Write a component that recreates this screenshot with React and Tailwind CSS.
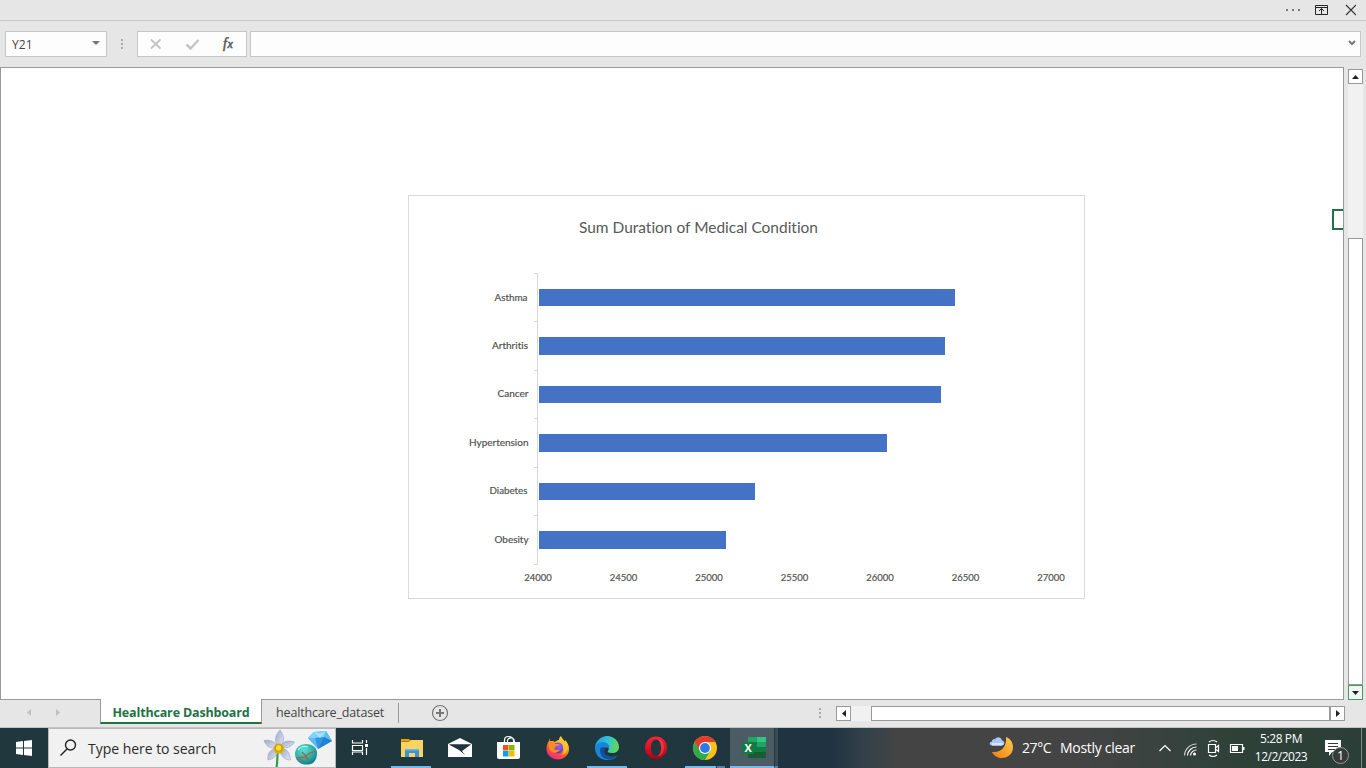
import React from "react";

const BARS = [
  { name: "Asthma", y: 289, h: 17, end: 955, base: 301, lx: 494.5, lw: 33 },
  { name: "Arthritis", y: 337, h: 18, end: 945, base: 349, lx: 492, lw: 36 },
  { name: "Cancer", y: 386, h: 17, end: 941, base: 397, lx: 497.5, lw: 31 },
  { name: "Hypertension", y: 434, h: 18, end: 887, base: 446, lx: 469, lw: 59.5 },
  { name: "Diabetes", y: 483, h: 17, end: 755, base: 494, lx: 489.5, lw: 38 },
  { name: "Obesity", y: 531, h: 18, end: 726, base: 543, lx: 494.5, lw: 34 },
];
const TICKS_Y = [273, 321, 370, 418, 467, 515, 564];
const LABELS_X = [24000, 24500, 25000, 25500, 26000, 26500, 27000];

function Chart() {
  return (
    <svg
      width="677"
      height="404"
      viewBox="408 195 677 404"
      className="block font-['Lato',sans-serif] [font-variant-ligatures:none]"
    >
      <rect x="408.5" y="195.5" width="676" height="403" fill="#fff" stroke="#d9d9d9" />
      <text x="579" y="233" fontSize="16" fill="#595959" textLength="239" lengthAdjust="spacingAndGlyphs">
        Sum Duration of Medical Condition
      </text>
      <path d="M537.5 273V565" stroke="#d9d9d9" />
      {TICKS_Y.map((y) => (
        <path key={y} d={`M534 ${y + 0.5}H538`} stroke="#d9d9d9" />
      ))}
      {BARS.map((b) => (
        <g key={b.name}>
          <rect x="539" y={b.y} width={b.end - 539} height={b.h} fill="#4472c4" />
          <text
            x={b.lx}
            y={b.base}
            fontSize="10"
            fill="#505050"
            stroke="#595959"
            strokeWidth="0.2"
            textLength={b.lw}
            lengthAdjust="spacingAndGlyphs"
          >
            {b.name}
          </text>
        </g>
      ))}
      {LABELS_X.map((v, i) => (
        <text
          key={v}
          x={524.3 + i * 85.5}
          y="581"
          fontSize="10"
          fill="#505050"
          stroke="#595959"
          strokeWidth="0.2"
          textLength="27.5"
          lengthAdjust="spacingAndGlyphs"
        >
          {v}
        </text>
      ))}
    </svg>
  );
}

function Dots({ className }) {
  return (
    <svg width="2" height="10" viewBox="0 0 2 10" className={className} fill="#aaa">
      <path d="M0 0h2v2H0zM0 4h2v2H0zM0 8h2v2H0z" />
    </svg>
  );
}

function TopBar() {
  return (
    <div className="flex h-[21px] items-start justify-end border-b border-[#c6c6c6] pr-[10px]">
      <svg width="71" height="20" viewBox="1285 0 71 20">
        <path d="M1286 9h2v2h-2zM1292 9h2v2h-2zM1298 9h2v2h-2z" fill="#777" />
        <path d="M1315.5 5.500h12v9h-12zM1315.500 7.500h12" fill="none" stroke="#262626" />
        <path d="M1321.500 14V8.500M1319 11l2.500-2.500 2.500 2.500" fill="none" stroke="#262626" />
        <path d="M1346 5l10 10M1356 5l-10 10" stroke="#333" strokeWidth="1.200" fill="none" />
      </svg>
    </div>
  );
}

function FormulaBar() {
  return (
    <div className="flex h-[46px] pl-[5px] pt-[10px]">
      <div className="flex h-[26px] w-[102px] items-center justify-between border border-[#c6c6c6] bg-[#fdfdfd] pl-[6px] pr-[6px]">
        <span className="pt-px font-['Open_Sans',sans-serif] text-[12px] tracking-[0.100px] text-[#444]">Y21</span>
        <svg width="8" height="4" viewBox="0 0 8 4" className="mb-[3px]" fill="#777">
          <path d="M0 0h8L4 4z" />
        </svg>
      </div>
      <Dots className="ml-[14px] mt-2" />
      <div className="ml-[14px] flex h-[26px] w-[110px] border border-[#c6c6c6] bg-[#fdfdfd]">
        <svg width="108" height="24" viewBox="138 32 108 24" fill="none">
          <path d="M151 39.500l9.500 9M160.500 39.500l-9.500 9" stroke="#c3c3c3" strokeWidth="1.800" />
          <path d="M186.500 44.500l4 4 8-8.500" stroke="#c6c6c6" strokeWidth="2.500" />
          <text x="223" y="48" fontSize="14" fontStyle="italic" fill="#555" stroke="#555" strokeWidth="0.500" className="font-['Liberation_Serif',serif]">f</text>
          <text x="227.500" y="48" fontSize="12" fontStyle="italic" fill="#555" stroke="#555" strokeWidth="0.500" className="font-['Liberation_Serif',serif]">x</text>
        </svg>
      </div>
      <div className="ml-[3px] flex h-[26px] w-[1111px] items-center justify-end border border-[#c6c6c6] bg-[#fdfdfd] pr-[4px]">
        <svg width="8" height="6" viewBox="0 0 8 6" fill="none" className="mb-[2px]">
          <path d="M1 1l3 3 3-3" stroke="#777" strokeWidth="2" />
        </svg>
      </div>
    </div>
  );
}

function Sheet() {
  return (
    <div className="flex h-[633px]">
      <div className="flex h-[633px] w-[1344px] justify-between overflow-hidden border border-[#999] bg-white">
        <div className="pl-[407px] pt-[127px]">
          <Chart />
        </div>
        <div className="mt-[141px] h-[21px] w-[11px] border-2 border-r-0 border-[#217346]" />
      </div>
      <div className="ml-[4px] mt-[2px] flex h-[631px] w-[15px] flex-col bg-[#f1f1f1]">
        <div className="flex h-[15px] items-center justify-center border border-[#999] bg-white">
          <svg width="7" height="4" viewBox="0 0 7 4" fill="#222"><path d="M0 4h7L3.500 0z" /></svg>
        </div>
        <div className="mt-[154px] h-[447px] border border-[#999] bg-white" />
        <div className="flex h-[15px] items-center justify-center border border-[#439b63] bg-[#f0f8f3]">
          <svg width="7" height="4" viewBox="0 0 7 4" fill="#222"><path d="M0 0h7L3.500 4z" /></svg>
        </div>
      </div>
    </div>
  );
}

function SheetTabs() {
  return (
    <div className="flex h-[28px] items-start border-b border-[#c4c4c4] font-['Open_Sans',sans-serif] text-[12.500px]">
      <svg width="100" height="27" viewBox="0 700 100 27" fill="#c0c0c0">
        <path d="M31 709v7l-4-3.500zM56 709v7l4-3.500z" />
      </svg>
      <div className="-mt-px flex h-[25px] w-[162px] items-center justify-center border-b-2 border-l border-r border-b-[#217346] border-l-[#999] border-r-[#999] bg-white pt-[5px]">
        <span className="whitespace-nowrap font-bold tracking-[-0.160px] text-[#217346]">Healthcare Dashboard</span>
      </div>
      <div className="flex h-[24px] w-[136px] items-center pl-[14px] pt-[2px]">
        <span className="whitespace-nowrap tracking-[-0.150px] text-[#444]">healthcare_dataset</span>
      </div>
      <div className="mt-[3px] h-[20px] w-px bg-[#999]" />
      <svg width="18" height="18" viewBox="0 0 18 18" className="ml-[32px] mt-[4px]" fill="none">
        <circle cx="9" cy="9" r="7.500" stroke="#777" strokeWidth="1.200" />
        <path d="M9 5v8M5 9h8" stroke="#777" strokeWidth="2" />
      </svg>
      <Dots className="ml-[370px] mt-[8px]" />
      <div className="ml-[15px] mt-[6px] flex h-[15px] w-[509px] bg-[#f1f1f1]">
        <div className="flex w-[15px] items-center justify-center border border-[#999] bg-white">
          <svg width="4" height="7" viewBox="0 0 4 7" fill="#222"><path d="M4 0v7L0 3.500z" /></svg>
        </div>
        <div className="ml-[20px] w-[459px] border border-[#999] bg-white" />
        <div className="flex w-[15px] items-center justify-center border border-[#999] bg-white">
          <svg width="4" height="7" viewBox="0 0 4 7" fill="#222"><path d="M0 0v7l4-3.500z" /></svg>
        </div>
      </div>
    </div>
  );
}

function SearchArt() {
  return (
    <svg width="72" height="38" viewBox="263 729 72 38">
      <defs>
        <radialGradient id="stone" cx="0.4" cy="0.3" r="0.8">
          <stop offset="0" stopColor="#5fe0d6" />
          <stop offset="0.6" stopColor="#27aaa6" />
          <stop offset="1" stopColor="#0e6f74" />
        </radialGradient>
        <linearGradient id="petal" x1="0" y1="0" x2="1" y2="1">
          <stop offset="0" stopColor="#9faacb" />
          <stop offset="1" stopColor="#dfe5f4" />
        </linearGradient>
      </defs>
      <path d="M277.500 752q0 9-1 16" stroke="#2f9e4f" strokeWidth="2.200" fill="none" />
      <g fill="url(#petal)" stroke="#8c98bd" strokeWidth="0.500">
        <path d="M278 746c-4-5-3-11 2-16 4 5 5 11 1 16z" />
        <path d="M281 746c2-5 7-6 13.500-4-3 5-8 7-13 5z" />
        <path d="M281 749c6-1 9 4 9.500 11-6 0-10-4-10.500-10z" />
        <path d="M277 750c1 5-3 9-9 10-1-6 2-11 8-11z" />
        <path d="M276 748c-6 1-10-2-12-7.500 6-1 12 1 13 6z" />
      </g>
      <circle cx="278.700" cy="748.500" r="5.300" fill="#dfae12" />
      <circle cx="278.700" cy="748" r="3.400" fill="#f8dc32" stroke="#b98408" strokeWidth="0.800" />
      <path d="M295 754c0-6 5-10 11-10 7 0 11 4 11 9 0 4-1 7-4 10-4 2-9 2-13 0-3-2-5-5-5-9z" fill="url(#stone)" />
      <path d="M297 758l8-1 5-4 6-2M302 752l4 4M306 757l3 4M299 759l5 2" stroke="#a26349" strokeWidth="1.300" fill="none" />
      <path d="M298 750q4-5 10-3" stroke="#a5f5eb" strokeWidth="1.300" fill="none" />
      <path d="M308 738l6-6 12-1 6 10-14 8z" fill="#4ab0ef" />
      <path d="M308 738l6-6 12-1-2 6-9 1z" fill="#7fd2fb" />
      <path d="M326 731l6 10-8-4z" fill="#5cbcf4" />
      <path d="M308 738h7l3 11z" fill="#5dbcf3" />
      <path d="M315 738l9-1-6 12z" fill="#2f97e4" />
      <path d="M324 737l8 4-14 8z" fill="#2380d4" />
      <path d="M314 732l6 2 6-3-6 7z" fill="#a8e4ff" />
    </svg>
  );
}

const Explorer = () => (
  <svg width="40" height="40" viewBox="390 728 40 40">
    <path d="M400 739h8l2 2h11v6h-21z" fill="#e3a008" />
    <path d="M400 742h8l2-2h12v17h-22z" fill="#ffd45e" />
    <path d="M401 741.500h7" stroke="#b77904" />
    <path d="M404 757v-8h14v8h-4v-4h-6v4z" fill="#3c91dc" />
    <path d="M404 749h14v1.500h-14z" fill="#66b4ee" />
  </svg>
);

const Mail = () => (
  <svg width="40" height="40" viewBox="440 728 40 40">
    <path d="M448 744l12-6 12 6v13h-24z" fill="#fff" />
    <path d="M449 744.500h22l-9 6.500 3 4-6-5z" fill="#20343d" />
    <path d="M449 744.500l11 5 11-5z" fill="#20343d" />
  </svg>
);

const Store = () => (
  <svg width="40" height="40" viewBox="489 728 40 40">
    <path d="M504.500 743v-3q0-3.500 4-3.500t5 3.500v3M507.500 742v-2q1-2.500 5-2 2 1 2 4" stroke="#fff" strokeWidth="1.200" fill="none" />
    <path d="M497 742h23v15q0 2-2 2h-19q-2 0-2-2z" fill="#fff" />
    <path d="M503 745h5.500v5.500H503z" fill="#f25022" />
    <path d="M509 745h5.500v5.500H509z" fill="#7fba00" />
    <path d="M503 751h5.500v5.500H503z" fill="#00a4ef" />
    <path d="M509 751h5.500v5.500H509z" fill="#ffb900" />
  </svg>
);

const Firefox = () => (
  <svg width="40" height="40" viewBox="538 728 40 40">
    <defs>
      <linearGradient id="fx" x1="0.800" y1="0" x2="0.250" y2="1">
        <stop offset="0" stopColor="#fff04a" />
        <stop offset="0.350" stopColor="#ffb01f" />
        <stop offset="0.650" stopColor="#ff562d" />
        <stop offset="1" stopColor="#f0209b" />
      </linearGradient>
      <radialGradient id="fxg" cx="0.600" cy="0.300" r="0.800">
        <stop offset="0" stopColor="#a15cff" />
        <stop offset="1" stopColor="#4b3bb0" />
      </radialGradient>
    </defs>
    <path d="M549 738l1 3 3 0 2 1c1-1 2-2 4-2 0-1 0-2 2-4 1 3 3 4 4 6v-2c3 3 4 6 4 9 0 6-5 10.500-11 10.500s-11.500-4.500-11.500-10.500c0-4 1-6 2.500-8z" fill="url(#fx)" />
    <circle cx="558" cy="748" r="5.500" fill="url(#fxg)" />
    <path d="M549 743c2-1 5-1 6 1l4 0c0 1.500-2 2-3.500 2.500 0 2-1 2-1.500 2 1 2 4 1 6 1-1 2-4 4-7 3-3-1-5-5-4-9.500z" fill="#ff8b22" />
    <path d="M558 741q5 0 5 6 2 5-2 8 6-1 6-7 0-5-6-11z" fill="#ffc42c" opacity="0.850" />
  </svg>
);

const Edge = () => (
  <svg width="40" height="40" viewBox="587 728 40 40">
    <defs>
      <linearGradient id="ed1" x1="0" y1="0.300" x2="1" y2="0.500">
        <stop offset="0" stopColor="#1a9bea" />
        <stop offset="0.500" stopColor="#31c3db" />
        <stop offset="1" stopColor="#62d94e" />
      </linearGradient>
      <linearGradient id="ed2" x1="0" y1="0" x2="0" y2="1">
        <stop offset="0" stopColor="#1685d8" />
        <stop offset="1" stopColor="#1b86dd" />
      </linearGradient>
    </defs>
    <path d="M595 748c0-7 6-12 12-12 7 0 12 5 12 11 0 4-3 6-7 6-3 0-5-1-4-2 2-3 1-8-5-8-4 0-7 2-8 5z" fill="url(#ed1)" />
    <path d="M595 748c1-4 5-6 9-6 4 1 6 3 5 7-1-2-4-2-5 1-1 4 3 7 8 7 3 0 4-1 5-1-2 3-6 4-10 4-7 0-12-5-12-12z" fill="url(#ed2)" />
    <path d="M600 750c0 6 4 9.500 9 9.500 4 0 7-2 8-4-4 2.500-9 2-11.500-.5-2-3-2-5 0-7.500-3-1.500-5.500 0-5.500 2.500z" fill="#10519f" />
  </svg>
);

const Opera = () => (
  <svg width="40" height="40" viewBox="636 728 40 40">
    <defs>
      <linearGradient id="op" x1="0" y1="0" x2="0" y2="1">
        <stop offset="0" stopColor="#ff2436" />
        <stop offset="1" stopColor="#b00018" />
      </linearGradient>
    </defs>
    <path fillRule="evenodd" d="M656 736.500a11 11.200 0 1 0 0 22.400 11 11.200 0 1 0 0-22.400zm0 3c3 0 5 3.500 5 8.200s-2 8.200-5 8.200-5-3.500-5-8.200 2-8.200 5-8.200z" fill="url(#op)" />
    <path d="M657 739.500c4-1 7 3 7 8.200s-3 9.200-7 8.200c3-1 4-4 4-8.200s-1-7.200-4-8.200z" fill="#ff5260" opacity="0.450" />
  </svg>
);

const Chrome = () => (
  <svg width="40" height="40" viewBox="-20 -20 40 40">
    <circle r="12" fill="#fbc116" />
    <path d="M-10.400-6A12 12 0 0 1 10.400-6H0L-5.200 3z" fill="#e33b2e" />
    <path d="M-10.400-6A12 12 0 0 0 0 12L5.200 3H-5.200z" fill="#2da94f" />
    <circle r="6" fill="#fff" />
    <circle r="4.900" fill="#2f78e8" />
  </svg>
);

const Excel = () => (
  <svg width="40" height="40" viewBox="735 728 40 40">
    <path d="M748 737h18v21h-18z" fill="#21a366" />
    <path d="M757 737h9v5h-9z" fill="#33c481" />
    <path d="M748 742h9v5h-9z" fill="#107c41" />
    <path d="M757 742h9v5h-9z" fill="#21a366" />
    <path d="M748 747h18v11h-18z" fill="#107c41" />
    <path d="M748 752h18v6h-18z" fill="#185c37" />
    <path d="M742 742h12v12h-12z" fill="#107c41" />
    <text x="744.500" y="752" fontSize="11" fontWeight="700" fill="#fff" className="font-['Open_Sans',sans-serif]">X</text>
  </svg>
);

function TaskButton({ icon, open, more }) {
  return (
    <div className="flex h-[40px] w-[49px] flex-col items-center">
      <div className="h-[38px] overflow-hidden">{icon}</div>
      {open && (
        <div className="flex h-[2px] w-[40px] bg-[#76b9ed]">
          {more && <div className="ml-auto h-[2px] w-[9px] border-l border-[#20343d] bg-[#5482a8]" />}
        </div>
      )}
    </div>
  );
}

function Taskbar() {
  return (
    <div className="flex h-[40px] bg-[linear-gradient(90deg,#20373d_0px,#20373d_660px,#1f3341_780px,#1f3341_830px,#33414a_865px,#444444_900px,#444444_1080px,#2d4139_1240px,#2b3f38_1366px)] font-['Open_Sans',sans-serif] text-white">
      <div className="flex h-[40px] w-[48px] items-center justify-center">
        <svg width="16" height="16" viewBox="0 0 16 16" fill="#fff">
          <path d="M0 2l7-1v6.500H0zM8 .9L16 0v7.500H8zM0 8.500h7V15l-7-1zM8 8.500h8V16l-8-1z" />
        </svg>
      </div>
      <div className="flex h-[40px] w-[288px] border border-[#b9b9b9] bg-[#f1f1f1]">
        <svg width="18" height="38" viewBox="0 0 18 38" className="ml-[10px]" fill="none" stroke="#222" strokeWidth="1.400">
          <circle cx="11.500" cy="16" r="5" />
          <path d="M8 20l-6.500 6.500" />
        </svg>
        <span className="ml-[11px] whitespace-nowrap text-[14px] leading-[39px] tracking-[-0.030px] text-[#2b2b2b]">Type here to search</span>
        <div className="ml-auto">
          <SearchArt />
        </div>
      </div>
      <div className="flex w-[50px] items-center justify-center pr-[2px]">
        <svg width="18" height="18" viewBox="351 739 18 18" fill="none" stroke="#fff" strokeWidth="1.200">
          <path d="M352.500 740v3h10v-3M352.500 755v-3h10v3M352.500 745.500h10v5h-10zM366.500 740v3M366.500 748v7" />
          <path d="M365 744h3v3h-3z" fill="#fff" stroke="none" />
        </svg>
      </div>
      <TaskButton icon={<Explorer />} open />
      <TaskButton icon={<Mail />} />
      <TaskButton icon={<Store />} />
      <TaskButton icon={<Firefox />} />
      <TaskButton icon={<Edge />} open />
      <TaskButton icon={<Opera />} />
      <TaskButton icon={<Chrome />} open more />
      <div className="ml-[1px] flex h-[40px] w-[48px] bg-[#4c5c65]">
        <div className="w-[44px] border-b-2 border-[#76b9ed]">
          <div className="h-[38px] overflow-hidden pl-[5px]"><Excel /></div>
        </div>
        <div className="w-[4px] border-b-2 border-l border-b-[#5482a8] border-l-[#26363f] bg-[#3b4b54]" />
      </div>
      <svg width="24" height="40" viewBox="989 728 24 40" className="ml-[211px]">
        <defs>
          <linearGradient id="moon" x1="1" y1="0" x2="0" y2="1">
            <stop offset="0" stopColor="#ffcf48" />
            <stop offset="1" stopColor="#ee7b13" />
          </linearGradient>
        </defs>
        <path d="M1006 737c5 2 7 6 7 10.500 0 6-5 10.500-11 10.500-4 0-8-2-10-6 9 1 15-5 14-15z" fill="url(#moon)" />
        <path d="M992 745.500c-3 0-3-4 0-4 0-2 2-3 3-2 1-3 6-3 7 1 3 0 3 5 0 5z" fill="#a9c8f8" />
        <path d="M992 743h11q0 2.500-2 2.500h-9z" fill="#d5e5fd" />
      </svg>
      <span className="ml-[9px] w-[38px] whitespace-nowrap text-[14px] leading-[40px] tracking-[-0.400px]">27°C</span>
      <span className="w-[99px] whitespace-nowrap text-[14px] leading-[40px] tracking-[-0.300px]">Mostly clear</span>
      <svg width="88" height="40" viewBox="1159 728 88 40" fill="none" stroke="#fff" strokeWidth="1.200">
        <path d="M1159.500 751l5.500-5.500 5.500 5.500" />
        <path d="M1187.500 755.500a9 9 0 0 1 9-8.500M1190.500 755.500a6 6 0 0 1 6-5.500" />
        <path d="M1184.500 755.500a12 12 0 0 1 12-11.500" stroke="#ccc" />
        <circle cx="1194.500" cy="754" r="1.500" fill="#fff" stroke="none" />
        <path d="M1208.500 744.500h7v8h-7zM1216 747.500l2.500-2v6l-2.500-2M1209 742q4-3 8 0M1209 755q4 3 8 0" />
        <path d="M1230.500 744.500h12v8h-12z" />
        <path d="M1243.500 747v3" strokeWidth="2" />
        <path d="M1232 746h6v5h-6z" fill="#fff" stroke="none" />
      </svg>
      <div className="flex w-[68px] flex-col items-center pt-[2px] text-[12px] leading-[18px] tracking-[-0.400px]">
        <span className="whitespace-nowrap">5:28 PM</span>
        <span className="whitespace-nowrap tracking-[-0.500px]">12/2/2023</span>
      </div>
      <svg width="48" height="40" viewBox="1315 728 48 40" className="block">
        <path d="M1325 740h16v12h-9l-3 4v-4h-4z" fill="#fff" />
        <path d="M1328 743.500h10M1328 746.500h10M1328 749.500h7" stroke="#2c4038" />
        <circle cx="1340.500" cy="755.500" r="8" fill="#343b39" stroke="#999" />
        <text x="1337" y="760" fontSize="12.500" fill="#fff">1</text>
        <path d="M1361.500 728v40" stroke="#7d8985" />
      </svg>
    </div>
  );
}

export default function App() {
  return (
    <div className="h-[768px] w-[1366px] overflow-hidden bg-[#e6e6e6]">
      <TopBar />
      <FormulaBar />
      <Sheet />
      <SheetTabs />
      <Taskbar />
    </div>
  );
}
